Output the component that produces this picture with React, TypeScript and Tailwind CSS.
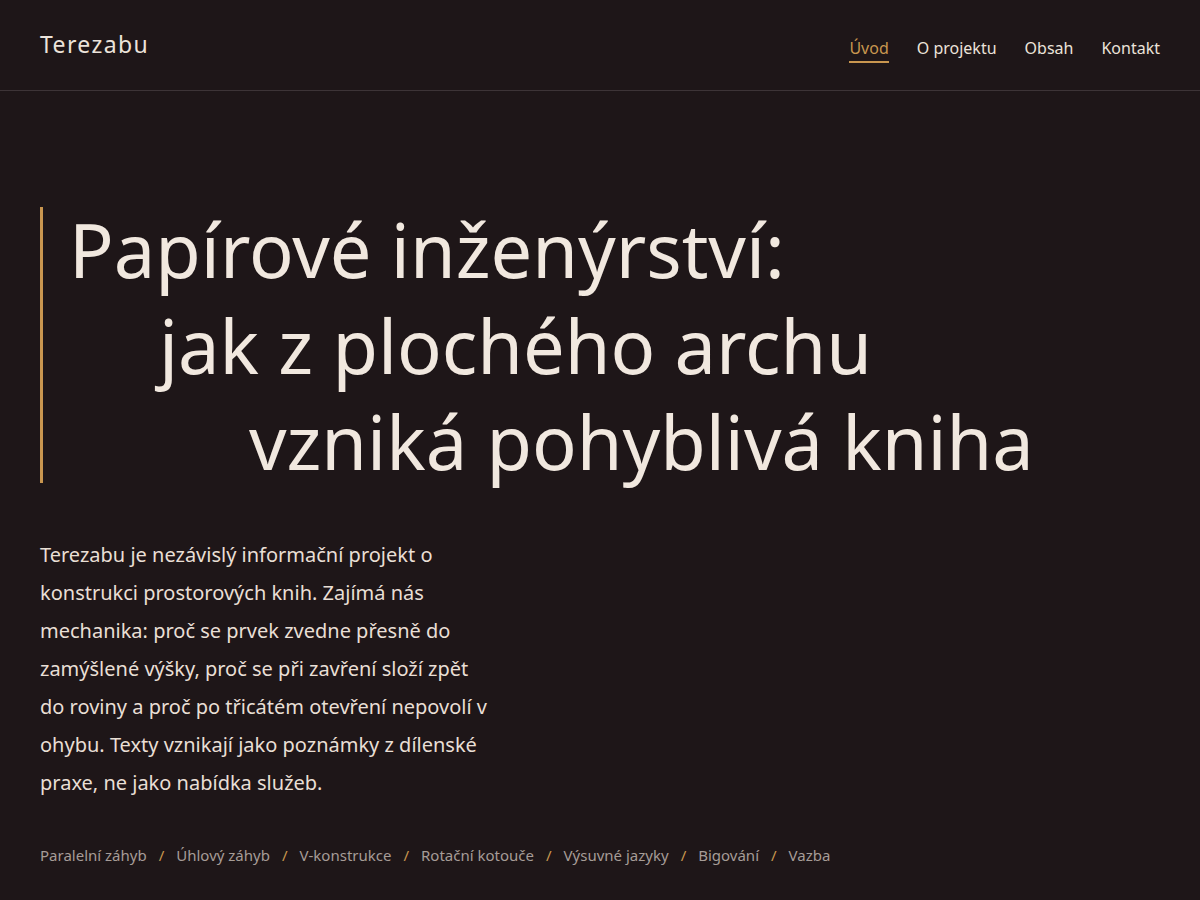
export default function App() {
  const tags = [
    "Paralelní záhyb",
    "Úhlový záhyb",
    "V-konstrukce",
    "Rotační kotouče",
    "Výsuvné jazyky",
    "Bigování",
    "Vazba",
  ];

  const links = ["Úvod", "O projektu", "Obsah", "Kontakt"];

  return (
    <div
      className="min-h-screen w-full bg-[#1e1618] text-[#efe6dd]"
      style={{ fontFamily: '"Noto Sans", "Open Sans", sans-serif' }}
    >
      {/* Header */}
      <header className="h-[91px] flex items-center justify-between px-10 border-b border-[#3d3437]">
        <div className="text-[23px] tracking-[0.06em] text-[#ece3da] -mt-[2px]">Terezabu</div>
        <nav className="flex items-center gap-7 text-[16px] mt-[2px]">
          {links.map((l, i) => (
            <a
              key={l}
              className={
                i === 0
                  ? "text-[#c9964f] border-b-2 border-[#c9964f] pt-[6px] pb-[1px]"
                  : "text-[#ece3da] border-b-2 border-transparent pt-[6px] pb-[1px]"
              }
            >
              {l}
            </a>
          ))}
        </nav>
      </header>

      <main className="px-10">
        {/* Heading */}
        <h1 className="mt-[111px] flex text-[74px] leading-[96px] font-normal text-[#f1e8df]">
          <span className="w-[3px] shrink-0 bg-[#c9964f] mt-[5px] mb-[7px]" />
          <span className="block pl-[26px]">
            <span className="block">Papírové inženýrství:</span>
            <span className="block pl-[90px]">jak z plochého archu</span>
            <span className="block pl-[180px]">vzniká pohyblivá kniha</span>
          </span>
        </h1>

        {/* Intro */}
        <p className="mt-[46px] max-w-[452px] text-[20px] leading-[38px] text-[#e9dfd5]">
          Terezabu je nezávislý informační projekt o konstrukci prostorových knih. Zajímá nás
          mechanika: proč se prvek zvedne přesně do zamýšlené výšky, proč se při zavření složí zpět
          do roviny a proč po třicátém otevření nepovolí v ohybu. Texty vznikají jako poznámky z
          dílenské praxe, ne jako nabídka služeb.
        </p>

        {/* Tags */}
        <ul className="mt-[42px] flex items-center text-[15px] text-[#a69c97]">
          {tags.map((t, i) => (
            <li key={t} className="flex items-center">
              {i > 0 && <span className="px-[12px] text-[#c9964f]">/</span>}
              <span>{t}</span>
            </li>
          ))}
        </ul>
      </main>
    </div>
  );
}
